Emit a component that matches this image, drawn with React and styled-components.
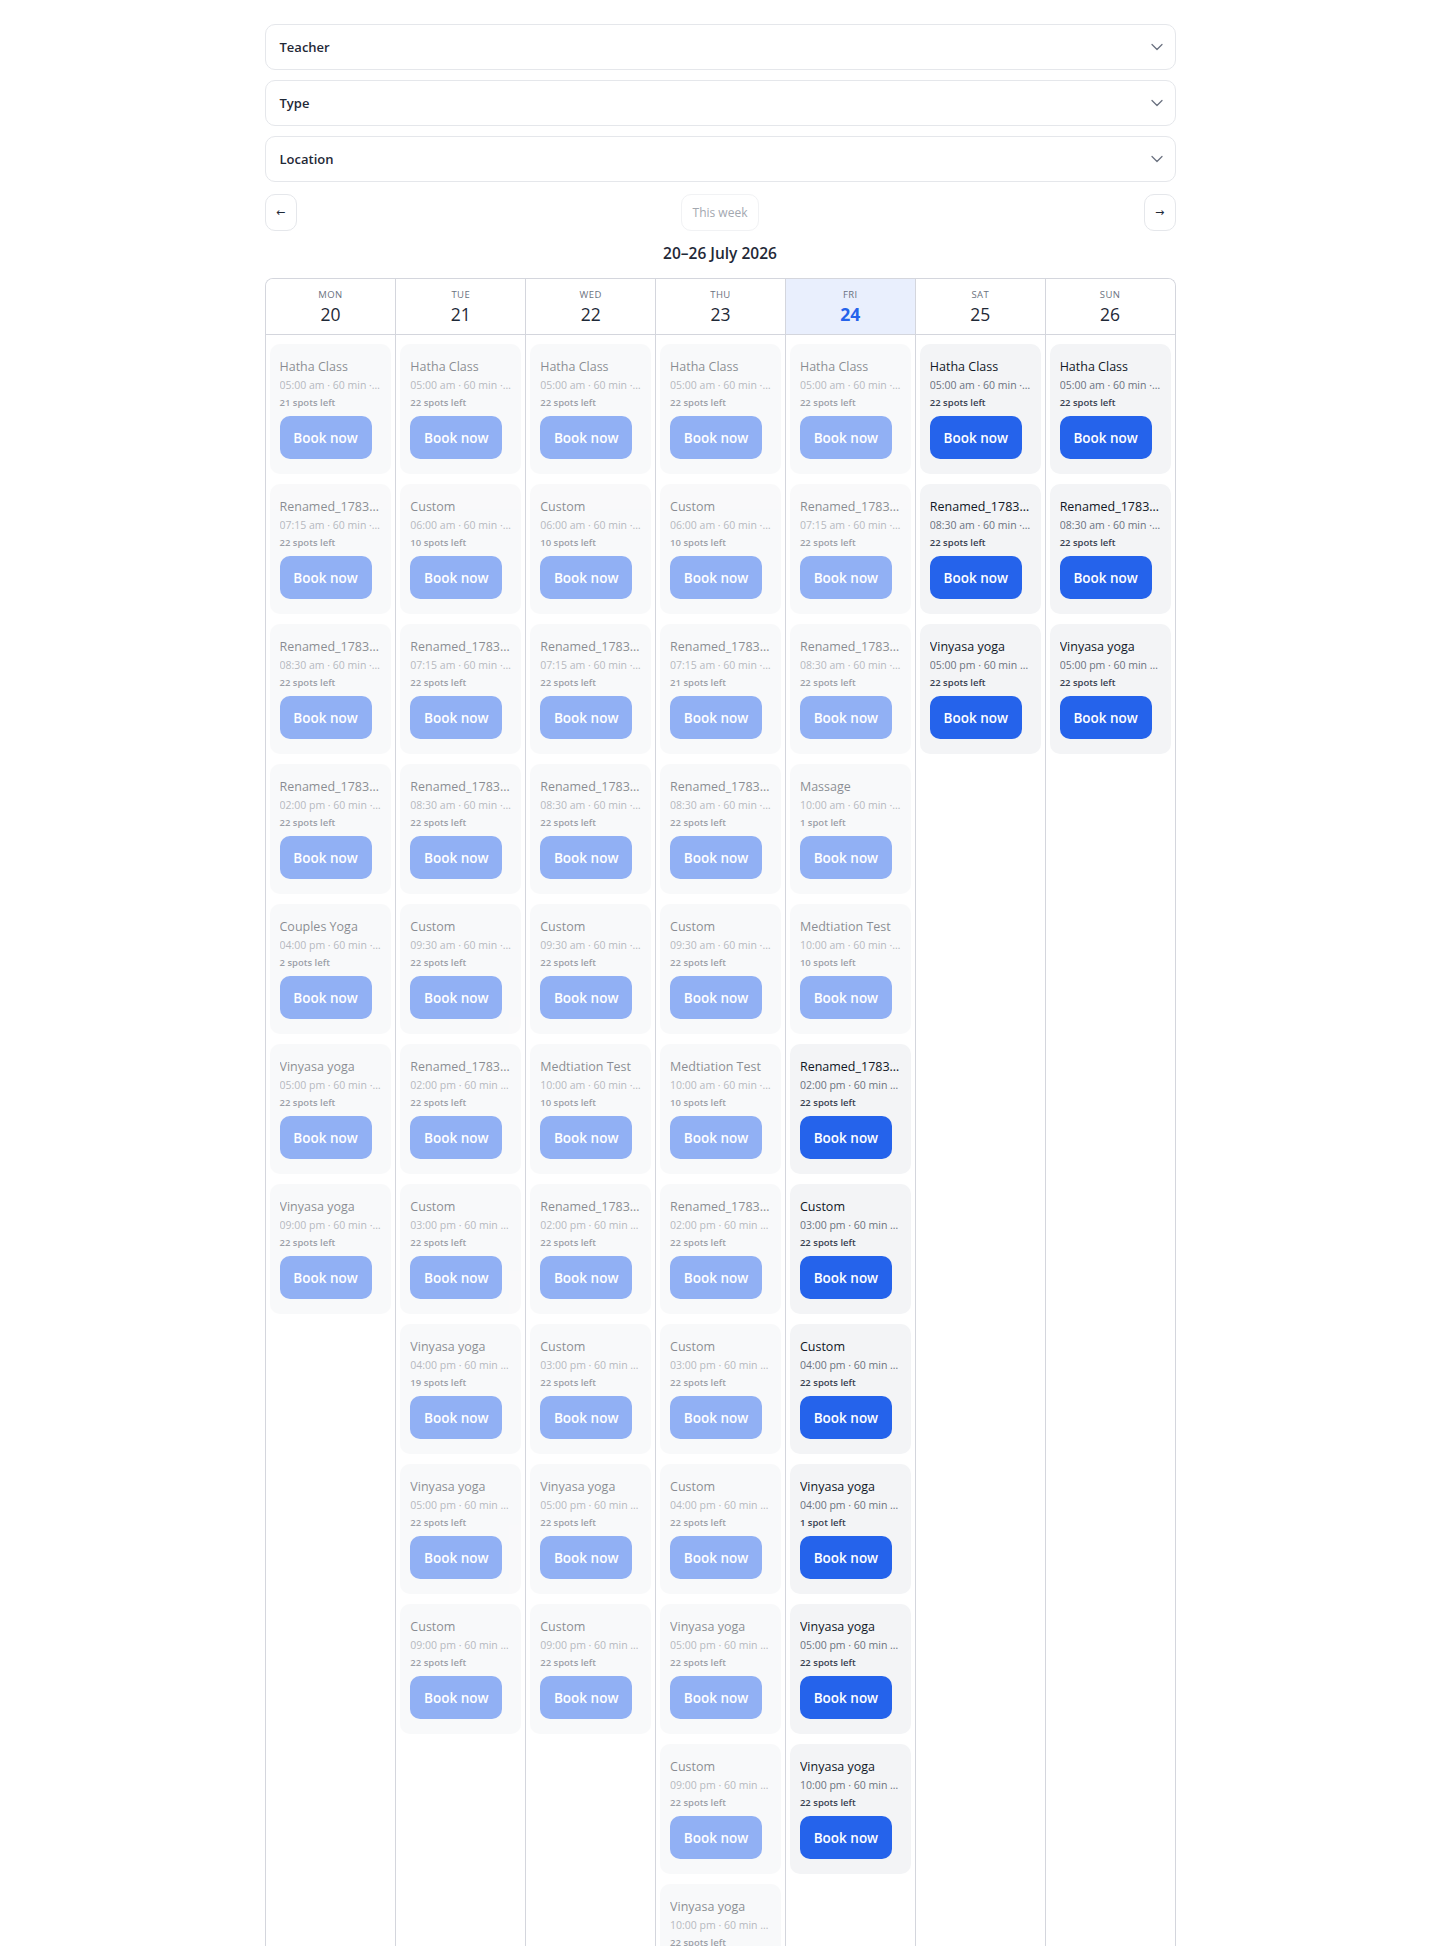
import React from 'react';
import styled, { createGlobalStyle } from 'styled-components';
import { ChevronDown } from 'lucide-react';

var GlobalStyle = createGlobalStyle`
    * {
        box-sizing: border-box;
    }
    body {
        margin: 0;
        background: #ffffff;
        font-family: 'Open Sans', 'Noto Sans', Arial, sans-serif;
        color: #1f2937;
    }
`;

var Page = styled.div`
    width: 911px;
    margin: 0 auto;
    padding: 24px 0 0;
`;

var Filters = styled.div`
    display: flex;
    flex-direction: column;
    gap: 10px;
`;

var FilterSelect = styled.button`
    display: flex;
    align-items: center;
    justify-content: space-between;
    height: 46px;
    width: 100%;
    padding: 0 8px 0 14px;
    background: #ffffff;
    border: 1px solid #e5e7eb;
    border-radius: 10px;
    font-family: inherit;
    font-size: 13px;
    font-weight: 600;
    color: #1f2937;
    cursor: pointer;

    svg {
        color: #6b7280;
    }
`;

var WeekNav = styled.div`
    display: flex;
    align-items: center;
    justify-content: space-between;
    margin-top: 12px;
`;

var ArrowButton = styled.button`
    width: 32px;
    height: 37px;
    padding: 0;
    background: #ffffff;
    border: 1px solid #e5e7eb;
    border-radius: 10px;
    font-family: 'DejaVu Sans', sans-serif;
    font-size: 11px;
    color: #1f2937;
    cursor: pointer;
`;

var ThisWeek = styled.button`
    height: 37px;
    width: 78px;
    padding: 0;
    background: #ffffff;
    border: 1px solid #f1f2f4;
    border-radius: 10px;
    font-family: inherit;
    font-size: 12px;
    color: #a3a8b0;
`;

var WeekTitle = styled.h2`
    margin: 12px 0 15px;
    text-align: center;
    font-size: 15.5px;
    line-height: 20px;
    font-weight: 600;
    color: #1f2937;
`;

var Calendar = styled.div`
    display: grid;
    grid-template-columns: repeat(7, 1fr);
    border: 1px solid #d4d6dd;
    border-bottom: 0;
    border-radius: 8px 8px 0 0;
    overflow: hidden;
`;

var DayColumn = styled.div`
    display: flex;
    flex-direction: column;
    min-width: 0;
    border-left: ${(p) => (p.$first ? '0' : '1px solid #d4d6dd')};
`;

var DayHeader = styled.div`
    display: flex;
    flex-direction: column;
    align-items: center;
    height: 56px;
    padding-top: 10px;
    border-bottom: 1px solid #d4d6dd;
    background: ${(p) => (p.$today ? '#e9effd' : '#ffffff')};
`;

var DayName = styled.span`
    font-size: 9.5px;
    line-height: 12px;
    letter-spacing: 0.04em;
    color: #6b7280;
`;

var DayNumber = styled.span`
    font-size: 17.5px;
    line-height: 27px;
    font-weight: ${(p) => (p.$today ? 700 : 400)};
    color: ${(p) => (p.$today ? '#2563eb' : '#1f2937')};
`;

var CardList = styled.div`
    display: flex;
    flex-direction: column;
    gap: 10px;
    padding: 9px 4px 10px;
`;

var ClassCard = styled.div`
    display: flex;
    flex-direction: column;
    align-items: flex-start;
    height: 130px;
    padding: 14px 10px;
    border-radius: 10px;
    background: #f3f4f6;
    opacity: ${(p) => (p.$past ? 0.5 : 1)};
`;

var ClassTitle = styled.div`
    width: 100%;
    font-size: 12.5px;
    line-height: 18px;
    font-weight: 500;
    color: #111827;
    white-space: nowrap;
    overflow: hidden;
    text-overflow: ellipsis;
`;

var ClassMeta = styled.div`
    width: 100%;
    margin-top: 1px;
    font-size: 10.5px;
    line-height: 16px;
    color: #6b7280;
    white-space: nowrap;
    overflow: hidden;
    text-overflow: ellipsis;
`;

var Spots = styled.div`
    margin-top: 3px;
    font-size: 9.5px;
    line-height: 14px;
    font-weight: 600;
    color: #374151;
`;

var BookButton = styled.button`
    margin-top: 6px;
    height: 43px;
    width: 92px;
    padding: 0;
    border: 0;
    border-radius: 10px;
    background: #2563eb;
    font-family: inherit;
    font-size: 13.5px;
    font-weight: 600;
    color: #ffffff;
    cursor: pointer;
`;

var R = 'Renamed_178345';
var c = (name, time, spots, past = true) => ({ name, time, spots, past });

var days = [
    {
        name: 'MON',
        num: 20,
        classes: [
            c('Hatha Class', '05:00 am', 21),
            c(R, '07:15 am', 22),
            c(R, '08:30 am', 22),
            c(R, '02:00 pm', 22),
            c('Couples Yoga', '04:00 pm', 2),
            c('Vinyasa yoga', '05:00 pm', 22),
            c('Vinyasa yoga', '09:00 pm', 22),
        ],
    },
    {
        name: 'TUE',
        num: 21,
        classes: [
            c('Hatha Class', '05:00 am', 22),
            c('Custom', '06:00 am', 10),
            c(R, '07:15 am', 22),
            c(R, '08:30 am', 22),
            c('Custom', '09:30 am', 22),
            c(R, '02:00 pm', 22),
            c('Custom', '03:00 pm', 22),
            c('Vinyasa yoga', '04:00 pm', 19),
            c('Vinyasa yoga', '05:00 pm', 22),
            c('Custom', '09:00 pm', 22),
        ],
    },
    {
        name: 'WED',
        num: 22,
        classes: [
            c('Hatha Class', '05:00 am', 22),
            c('Custom', '06:00 am', 10),
            c(R, '07:15 am', 22),
            c(R, '08:30 am', 22),
            c('Custom', '09:30 am', 22),
            c('Medtiation Test', '10:00 am', 10),
            c(R, '02:00 pm', 22),
            c('Custom', '03:00 pm', 22),
            c('Vinyasa yoga', '05:00 pm', 22),
            c('Custom', '09:00 pm', 22),
        ],
    },
    {
        name: 'THU',
        num: 23,
        classes: [
            c('Hatha Class', '05:00 am', 22),
            c('Custom', '06:00 am', 10),
            c(R, '07:15 am', 21),
            c(R, '08:30 am', 22),
            c('Custom', '09:30 am', 22),
            c('Medtiation Test', '10:00 am', 10),
            c(R, '02:00 pm', 22),
            c('Custom', '03:00 pm', 22),
            c('Custom', '04:00 pm', 22),
            c('Vinyasa yoga', '05:00 pm', 22),
            c('Custom', '09:00 pm', 22),
            c('Vinyasa yoga', '10:00 pm', 22),
        ],
    },
    {
        name: 'FRI',
        num: 24,
        today: true,
        classes: [
            c('Hatha Class', '05:00 am', 22),
            c(R, '07:15 am', 22),
            c(R, '08:30 am', 22),
            c('Massage', '10:00 am', 1),
            c('Medtiation Test', '10:00 am', 10),
            c(R, '02:00 pm', 22, false),
            c('Custom', '03:00 pm', 22, false),
            c('Custom', '04:00 pm', 22, false),
            c('Vinyasa yoga', '04:00 pm', 1, false),
            c('Vinyasa yoga', '05:00 pm', 22, false),
            c('Vinyasa yoga', '10:00 pm', 22, false),
        ],
    },
    {
        name: 'SAT',
        num: 25,
        classes: [
            c('Hatha Class', '05:00 am', 22, false),
            c(R, '08:30 am', 22, false),
            c('Vinyasa yoga', '05:00 pm', 22, false),
        ],
    },
    {
        name: 'SUN',
        num: 26,
        classes: [
            c('Hatha Class', '05:00 am', 22, false),
            c(R, '08:30 am', 22, false),
            c('Vinyasa yoga', '05:00 pm', 22, false),
        ],
    },
];

function Filter({ label }) {
    return (
        <FilterSelect type="button">
            <span>{label}</span>
            <ChevronDown size={20} strokeWidth={1.5} />
        </FilterSelect>
    );
}

export default function App() {
    return (
        <Page>
            <GlobalStyle />
            <Filters>
                <Filter label="Teacher" />
                <Filter label="Type" />
                <Filter label="Location" />
            </Filters>
            <WeekNav>
                <ArrowButton type="button">←</ArrowButton>
                <ThisWeek type="button" disabled>
                    This week
                </ThisWeek>
                <ArrowButton type="button">→</ArrowButton>
            </WeekNav>
            <WeekTitle>20–26 July 2026</WeekTitle>
            <Calendar>
                {days.map((day, i) => (
                    <DayColumn key={day.name} $first={i === 0}>
                        <DayHeader $today={day.today}>
                            <DayName>{day.name}</DayName>
                            <DayNumber $today={day.today}>{day.num}</DayNumber>
                        </DayHeader>
                        <CardList>
                            {day.classes.map((cl, j) => (
                                <ClassCard key={j} $past={cl.past}>
                                    <ClassTitle>{cl.name}</ClassTitle>
                                    <ClassMeta>{`${cl.time} · 60 min · Hall`}</ClassMeta>
                                    <Spots>
                                        {`${cl.spots} ${cl.spots === 1 ? 'spot' : 'spots'} left`}
                                    </Spots>
                                    <BookButton type="button">Book now</BookButton>
                                </ClassCard>
                            ))}
                        </CardList>
                    </DayColumn>
                ))}
            </Calendar>
        </Page>
    );
}
